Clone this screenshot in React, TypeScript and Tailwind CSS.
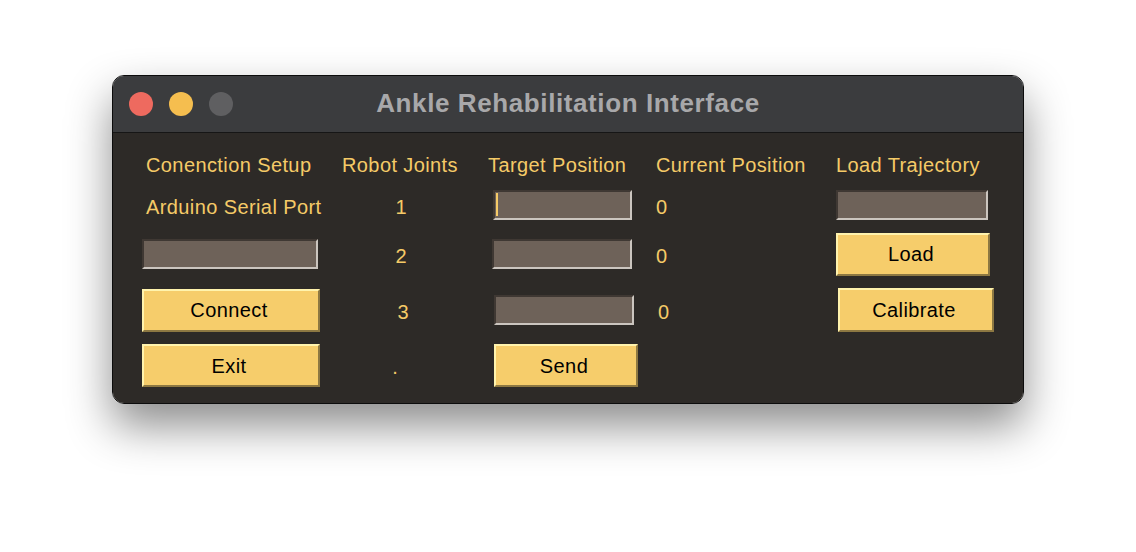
const label = "text-[20px] leading-none tracking-[0.4px] text-[#f5ca67]";
const value = "pt-[3px] text-[20px] leading-none text-[#f5ca67]";
const entry =
  "h-[30px] border-2 border-t-[#3f3833] border-l-[#3f3833] border-b-[#cbc5bf] border-r-[#cbc5bf] bg-[#6e6259]";
const button =
  "flex h-[43px] items-center justify-center border-2 border-t-[#fff3ad] border-l-[#fff3ad] border-b-[#8d7842] border-r-[#8d7842] bg-[#f6cd6b] pr-1 text-[20px] tracking-[0.4px] text-black";

function TrafficLights() {
  return (
    <div className="flex items-center gap-4 pl-4">
      <span className="h-6 w-6 rounded-full bg-[#ee6a5f]" />
      <span className="h-6 w-6 rounded-full bg-[#f5be4f]" />
      <span className="h-6 w-6 rounded-full bg-[#5f5f61]" />
    </div>
  );
}

export default function App() {
  return (
    <div
      className="min-h-[552px] w-full bg-white pt-[75px]"
      style={{ fontFamily: '"Liberation Sans", Arial, sans-serif' }}
    >
      <div className="mx-auto w-[912px] overflow-hidden rounded-[12px] border border-[#0c0c0c] shadow-[0_22px_45px_rgba(0,0,0,0.45)]">
        <div className="relative flex h-[57px] items-center border-b border-[#161616] bg-[#3b3c3e]">
          <TrafficLights />
          <div className="absolute inset-0 flex items-center justify-center pb-[2px] text-[26px] font-bold tracking-[0.6px] text-[#a8a8aa]">
            Ankle Rehabilitation Interface
          </div>
        </div>

        <div className="grid grid-cols-[200px_146px_168px_180px_170px] grid-rows-[26px_30px_44px_44px_43px] items-center gap-y-3 bg-[#2d2a27] pb-4 pl-[29px] pt-[19px]">
          {/* header row */}
          <div className={`${label} ml-1`}>Conenction Setup</div>
          <div className={`${label} w-[116px] whitespace-nowrap text-center`}>Robot Joints</div>
          <div className={`${label} whitespace-nowrap`}>Target Position</div>
          <div className={`${label} whitespace-nowrap`}>Current Position</div>
          <div className={`${label} whitespace-nowrap`}>Load Trajectory</div>

          {/* row 1 */}
          <div className={`${label} ml-1 whitespace-nowrap pt-[3px]`}>Arduino Serial Port</div>
          <div className={`${value} w-[118px] text-center`}>1</div>
          <div className={`${entry} relative ml-[5px] h-[29px] w-[139px]`}>
            <span className="absolute left-[1px] top-[1px] h-[23px] w-[2px] bg-[#f5ca67]" />
          </div>
          <div className={value}>0</div>
          <div className={`${entry} h-[29px] w-[152px]`} />

          {/* row 2 */}
          <div className={`${entry} w-[176px]`} />
          <div className={`${value} w-[118px] text-center`}>2</div>
          <div className={`${entry} ml-1 w-[140px]`} />
          <div className={value}>0</div>
          <div className={`${button} w-[154px]`}>Load</div>

          {/* row 3 */}
          <div className={`${button} w-[178px]`}>Connect</div>
          <div className={`${value} w-[122px] text-center`}>3</div>
          <div className={`${entry} ml-[6px] w-[140px]`} />
          <div className={`${value} ml-[2px]`}>0</div>
          <div className={`${button} ml-[2px] h-[44px] w-[156px]`}>Calibrate</div>

          {/* row 4 */}
          <div className={`${button} w-[178px]`}>Exit</div>
          <div className={`${value} w-[106px] pt-2 text-center`}>.</div>
          <div className={`${button} ml-[6px] w-[144px]`}>Send</div>
          <div />
          <div />
        </div>
      </div>
    </div>
  );
}
